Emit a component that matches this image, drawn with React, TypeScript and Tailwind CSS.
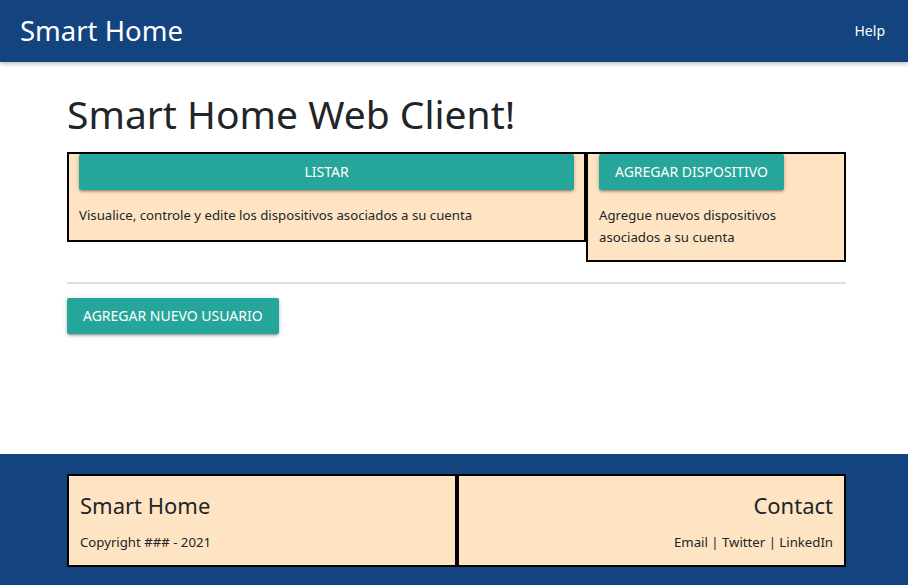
export default function App() {
  return (
    <div className="flex min-h-screen flex-col bg-white font-['Noto_Sans',sans-serif] text-[#212529]">
      <nav className="flex h-[62px] items-center justify-between bg-[#13447f] px-5 text-white shadow-[0_2px_4px_rgba(0,0,0,0.25)]">
        <span className="text-[27.5px] leading-none">Smart Home</span>
        <span className="pr-[3px] text-sm">Help</span>
      </nav>

      <main className="ml-[67px] w-[779px] flex-1 pt-[28px]">
        <h1 className="text-[39px] leading-[48px]">Smart Home Web Client!</h1>

        <div className="mt-[14px] flex items-start">
          <div className="w-[519px] border-2 border-black bg-[#ffe4c4] px-[10px] pb-[14px]">
            <button className="h-9 w-full rounded-[2px] bg-[#26a69a] text-sm text-white shadow-[0_2px_2px_rgba(0,0,0,0.14),0_3px_1px_-2px_rgba(0,0,0,0.12),0_1px_5px_rgba(0,0,0,0.2)]">
              LISTAR
            </button>
            <p className="mt-[14px] text-[13.2px] leading-[22px]">
              Visualice, controle y edite los dispositivos asociados a su cuenta
            </p>
          </div>
          <div className="flex-1 border-2 border-black bg-[#ffe4c4] px-[11px] pb-[12px]">
            <button className="h-9 rounded-[2px] bg-[#26a69a] px-4 text-sm text-white shadow-[0_2px_2px_rgba(0,0,0,0.14),0_3px_1px_-2px_rgba(0,0,0,0.12),0_1px_5px_rgba(0,0,0,0.2)]">
              AGREGAR DISPOSITIVO
            </button>
            <p className="mt-[14px] text-[13.2px] leading-[22px]">
              Agregue nuevos dispositivos asociados a su cuenta
            </p>
          </div>
        </div>

        <hr className="mt-[20px] border-t-2 border-[#dedede]" />

        <button className="mt-[14px] h-9 rounded-[2px] bg-[#26a69a] px-4 text-sm text-white shadow-[0_2px_2px_rgba(0,0,0,0.14),0_3px_1px_-2px_rgba(0,0,0,0.12),0_1px_5px_rgba(0,0,0,0.2)]">
          AGREGAR NUEVO USUARIO
        </button>
      </main>

      <footer className="bg-[#13447f] pt-5 pb-[18px]">
        <div className="ml-[67px] flex w-[779px]">
          <div className="flex h-[93px] flex-1 flex-col border-2 border-black bg-[#ffe4c4] px-[11px] pt-[15px]">
            <span className="text-[22px] leading-7">Smart Home</span>
            <span className="mt-[14px] text-[13.2px]">Copyright ### - 2021</span>
          </div>
          <div className="flex h-[93px] flex-1 flex-col items-end border-2 border-black bg-[#ffe4c4] px-[11px] pt-[15px]">
            <span className="text-[22px] leading-7">Contact</span>
            <span className="mt-[14px] text-[13.2px]">Email | Twitter | LinkedIn</span>
          </div>
        </div>
      </footer>
    </div>
  );
}
